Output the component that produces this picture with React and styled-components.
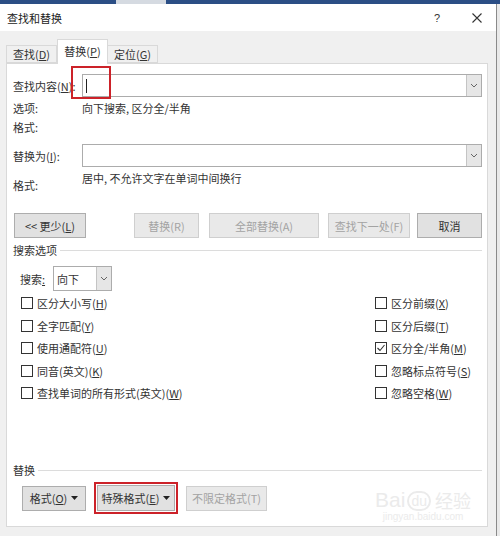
import React from 'react'
import styled, { createGlobalStyle } from 'styled-components'

const Global = createGlobalStyle`
  html, body { margin: 0; padding: 0; background: #e9e9e9; }
  body { font-family: "Noto Sans CJK SC", "Noto Sans", sans-serif; color: #333; }
`

const Screen = styled.div`
  width: 500px;
  height: 536px;
  overflow: hidden;
  display: flex;
  flex-direction: column;
  background: #e9e9e9;
`

const TopStrip = styled.div`
  height: 4px;
  display: flex;
  flex-shrink: 0;
`

const StripSeg = styled.div`
  width: ${(p) => (p.$w ? p.$w + 'px' : 'auto')};
  flex: ${(p) => (p.$w ? 'none' : 1)};
  background: ${(p) => (p.$light ? '#d5dae1' : '#2b4e85')};
`

const Window = styled.div`
  flex: 1;
  width: 497px;
  box-sizing: border-box;
  border-right: 1px solid #8a8a8a;
  display: flex;
  flex-direction: column;
  background: #f0f0f0;
`

const TitleBar = styled.div`
  height: 27px;
  flex-shrink: 0;
  background: #fff;
  display: flex;
  align-items: center;
  padding-left: 7px;
  font-size: 11px;
  color: #222;
`

const TitleControls = styled.div`
  margin-left: auto;
  display: flex;
  align-items: center;
  gap: 32px;
  padding-right: 14px;
`

const Help = styled.span`
  font-family: "Liberation Sans", sans-serif;
  font-size: 11px;
  color: #333;
`

const Body = styled.div`
  flex: 1;
  padding: 8px 0 0 6px;
  display: flex;
  flex-direction: column;
`

const TabBar = styled.div`
  height: 24px;
  display: flex;
  align-items: flex-end;
  position: relative;
  z-index: 1;
`

const Tab = styled.div`
  width: ${(p) => p.$w}px;
  height: ${(p) => (p.$active ? 25 : 18)}px;
  margin-bottom: ${(p) => (p.$active ? -1 : 0)}px;
  box-sizing: border-box;
  border: 1px solid #d9d9d9;
  border-bottom: ${(p) => (p.$active ? 'none' : '1px solid #d9d9d9')};
  border-left: ${(p) => (p.$active || p.$first ? '1px solid #d9d9d9' : 'none')};
  background: ${(p) => (p.$active ? '#fff' : '#f0f0f0')};
  display: flex;
  align-items: ${(p) => (p.$active ? 'flex-start' : 'center')};
  padding-top: ${(p) => (p.$active ? 3 : 0)}px;
  justify-content: center;
  font-size: 11px;
  color: #333;
`

const Panel = styled.div`
  width: 482px;
  height: 464px;
  box-sizing: border-box;
  background: #fff;
  border: 1px solid #d9d9d9;
  padding: 0 5px 12px 6px;
  display: flex;
  flex-direction: column;
  position: relative;
  font-size: 11px;
`

const FieldRow = styled.div`
  display: grid;
  grid-template-columns: 69px 1fr;
  align-items: center;
  height: 23px;
  margin-top: ${(p) => p.$mt}px;
  position: relative;
`

const InfoRow = styled.div`
  display: grid;
  grid-template-columns: 69px 1fr;
  align-items: ${(p) => (p.$split ? 'start' : 'center')};
  height: ${(p) => p.$h || 16}px;
  line-height: 16px;
  margin-top: ${(p) => p.$mt}px;
`

const Label = styled.span`
  white-space: nowrap;
  padding-top: ${(p) => p.$pt || 0}px;
`

const Combo = styled.div`
  display: flex;
  height: ${(p) => p.$h || 23}px;
  width: ${(p) => (p.$w ? p.$w + 'px' : 'auto')};
  box-sizing: border-box;
  border: 1px solid #acacac;
  background: #fff;
`

const ComboText = styled.div`
  flex: 1;
  display: flex;
  align-items: center;
  padding-left: 3px;
  white-space: nowrap;
`

const Caret = styled.span`
  width: 1px;
  height: 14px;
  background: #222;
`

const ComboButton = styled.div`
  width: 14px;
  background: #e6e6e6;
  border-left: 1px solid #c4c4c4;
  display: flex;
  align-items: center;
  justify-content: center;
`

const Highlight = styled.div`
  position: absolute;
  left: 58px;
  top: -8px;
  width: 40px;
  height: 33px;
  box-sizing: border-box;
  border: 2px solid #cc2229;
  pointer-events: none;
`

const ButtonRow = styled.div`
  display: flex;
  align-items: center;
  height: 25px;
  margin-top: ${(p) => p.$mt}px;
  padding-left: ${(p) => p.$pl || 0}px;
`

const ButtonGroup = styled.div`
  margin-left: auto;
  display: flex;
`

const Button = styled.div`
  width: ${(p) => p.$w}px;
  height: ${(p) => p.$h || 25}px;
  margin-left: ${(p) => p.$ml || 0}px;
  box-sizing: border-box;
  border: 1px solid ${(p) => (p.$disabled ? '#cfcfcf' : '#adadad')};
  background: ${(p) => (p.$disabled ? '#e9e9e9' : '#e1e1e1')};
  color: ${(p) => (p.$disabled ? '#a3a3a3' : '#333')};
  display: flex;
  align-items: center;
  justify-content: center;
  font-size: 11px;
  white-space: nowrap;

  svg {
    margin-left: 4px;
  }
`

const RedFrame = styled.div`
  border: 2px solid #cc2229;
  padding: 1px;
  display: flex;
`

const Legend = styled.div`
  display: flex;
  align-items: center;
  height: 16px;
  margin-top: ${(p) => p.$mt}px;
  white-space: nowrap;

  &::after {
    content: '';
    flex: 1;
    height: 1px;
    background: #dcdcdc;
    margin-left: 3px;
  }
`

const SearchRow = styled.div`
  display: flex;
  align-items: center;
  height: 25px;
  margin-top: 8px;
  padding-left: 7px;
`

const SearchLabel = styled.span`
  width: 33px;
`

const Options = styled.div`
  display: grid;
  grid-template-columns: 362px 1fr;
  grid-auto-rows: 22.5px;
  margin-top: 1px;
`

const Option = styled.label`
  display: flex;
  align-items: center;
  gap: 4px;
  padding-left: ${(p) => (p.$right ? 0 : 8)}px;
  white-space: nowrap;
`

const Box = styled.span`
  width: 12px;
  height: 12px;
  box-sizing: border-box;
  border: 1px solid #333;
  background: #fff;
  display: flex;
  align-items: center;
  justify-content: center;
`

const Bottom = styled.div`
  margin-top: auto;
  display: flex;
  flex-direction: column;
`

const BottomButtons = styled.div`
  display: flex;
  align-items: center;
  gap: 8px;
  padding-left: 9px;
  margin-top: 4px;
`

const Watermark = styled.div`
  position: absolute;
  right: 16px;
  bottom: 3px;
  display: flex;
  flex-direction: column;
  align-items: center;
  color: #ebebeb;
  pointer-events: none;
`

const WmTop = styled.div`
  display: flex;
  align-items: flex-end;
  font-family: "Liberation Sans", sans-serif;
  font-size: 21px;
  line-height: 22px;
`

const WmDu = styled.span`
  font-size: 14px;
  border: 2px solid #ebebeb;
  border-radius: 10px;
  padding: 0 2px;
  margin: 0 2px;
  line-height: 16px;
`

const WmCn = styled.span`
  font-family: "Noto Sans CJK SC", sans-serif;
  font-size: 18px;
  margin-left: 2px;
`

const WmUrl = styled.span`
  font-family: "Liberation Sans", sans-serif;
  font-size: 10px;
  line-height: 12px;
`

const Chevron = () => (
  <svg width="8" height="5" viewBox="0 0 8 5">
    <polyline points="1 1 4 4 7 1" fill="none" stroke="#666" strokeWidth="1" />
  </svg>
)

const Drop = () => (
  <svg width="7" height="4" viewBox="0 0 7 4">
    <polygon points="0 0 7 0 3.5 4" fill="#222" />
  </svg>
)

const Check = () => (
  <svg width="10" height="10" viewBox="0 0 10 10">
    <polyline points="1.5 5 4 7.5 8.5 2" fill="none" stroke="#333" strokeWidth="1.1" />
  </svg>
)

const CloseIcon = () => (
  <svg width="10" height="10" viewBox="0 0 10 10">
    <path d="M0.5 0.5 L9.5 9.5 M9.5 0.5 L0.5 9.5" stroke="#333" strokeWidth="1.1" />
  </svg>
)

const options = [
  { text: '区分大小写', key: 'H' },
  { text: '区分前缀', key: 'X', right: true },
  { text: '全字匹配', key: 'Y' },
  { text: '区分后缀', key: 'T', right: true },
  { text: '使用通配符', key: 'U' },
  { text: '区分全/半角', key: 'M', right: true, checked: true },
  { text: '同音(英文)', key: 'K' },
  { text: '忽略标点符号', key: 'S', right: true },
  { text: '查找单词的所有形式(英文)', key: 'W' },
  { text: '忽略空格', key: 'W', right: true },
]

export default function App() {
  return (
    <>
      <Global />
      <Screen>
        <TopStrip>
          <StripSeg $w={116} />
          <StripSeg $w={50} $light />
          <StripSeg />
        </TopStrip>
        <Window>
          <TitleBar>
            查找和替换
            <TitleControls>
              <Help>?</Help>
              <CloseIcon />
            </TitleControls>
          </TitleBar>
          <Body>
            <TabBar>
              <Tab $w={51} $first><span>查找(<u>D</u>)</span></Tab>
              <Tab $w={51} $active><span>替换(<u>P</u>)</span></Tab>
              <Tab $w={50}><span>定位(<u>G</u>)</span></Tab>
            </TabBar>
            <Panel>
              <FieldRow $mt={10}>
                <Label>查找内容(<u>N</u>):</Label>
                <Combo>
                  <ComboText><Caret /></ComboText>
                  <ComboButton><Chevron /></ComboButton>
                </Combo>
                <Highlight />
              </FieldRow>
              <InfoRow $mt={3}>
                <Label>选项:</Label>
                <span>向下搜索, 区分全/半角</span>
              </InfoRow>
              <InfoRow $mt={3}>
                <Label>格式:</Label>
                <span />
              </InfoRow>
              <FieldRow $mt={9}>
                <Label>替换为(<u>I</u>):</Label>
                <Combo>
                  <ComboText />
                  <ComboButton><Chevron /></ComboButton>
                </Combo>
              </FieldRow>
              <InfoRow $mt={3} $h={23} $split>
                <Label $pt={7}>格式:</Label>
                <span>居中, 不允许文字在单词中间换行</span>
              </InfoRow>
              <ButtonRow $mt={20} $pl={1}>
                <Button $w={72}><span>&lt;&lt; 更少(<u>L</u>)</span></Button>
                <ButtonGroup>
                  <Button $w={65} $disabled><span>替换(R)</span></Button>
                  <Button $w={110} $ml={10} $disabled><span>全部替换(A)</span></Button>
                  <Button $w={82} $ml={9} $disabled><span>查找下一处(F)</span></Button>
                  <Button $w={65} $ml={7}><span>取消</span></Button>
                </ButtonGroup>
              </ButtonRow>
              <Legend $mt={4}>搜索选项</Legend>
              <SearchRow>
                <SearchLabel>搜索<u>:</u></SearchLabel>
                <Combo $w={59} $h={25}>
                  <ComboText>向下</ComboText>
                  <ComboButton><Chevron /></ComboButton>
                </Combo>
              </SearchRow>
              <Options>
                {options.map((o, i) => (
                  <Option key={i} $right={o.right}>
                    <Box>{o.checked && <Check />}</Box>
                    <span>{o.text}(<u>{o.key}</u>)</span>
                  </Option>
                ))}
              </Options>
              <Bottom>
                <Legend $mt={0}>替换</Legend>
                <BottomButtons>
                  <Button $w={64}><span>格式(<u>O</u>)</span><Drop /></Button>
                  <RedFrame>
                    <Button $w={78} $h={26}><span>特殊格式(<u>E</u>)</span><Drop /></Button>
                  </RedFrame>
                  <Button $w={81} $disabled><span>不限定格式(T)</span></Button>
                </BottomButtons>
              </Bottom>
              <Watermark>
                <WmTop>
                  Bai<WmDu>du</WmDu><WmCn>经验</WmCn>
                </WmTop>
                <WmUrl>jingyan.baidu.com</WmUrl>
              </Watermark>
            </Panel>
          </Body>
        </Window>
      </Screen>
    </>
  )
}
